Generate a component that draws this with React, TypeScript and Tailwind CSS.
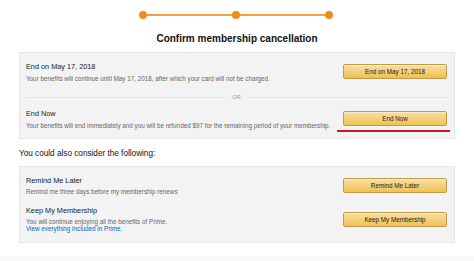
import React from 'react';

const font = { fontFamily: '"Liberation Sans", Arial, sans-serif' };

const YellowButton: React.FC<{ label: string }> = ({ label }) => (
  <button className="w-[104px] h-[15px] shrink-0 rounded-[2px] border border-[#bf9d48] bg-gradient-to-b from-[#f7dfa5] to-[#f0c14b] text-[6.3px] leading-[13px] text-[#222] shadow-[0_1px_0_rgba(255,255,255,0.4)_inset]">
    {label}
  </button>
);

const Option: React.FC<{ title: string; children: React.ReactNode; gap?: string }> = ({ title, children, gap = 'mt-[3.6px]' }) => (
  <div className="min-w-0">
    <div className="text-[7.3px] leading-[9px] text-[#222]">{title}</div>
    <div className={`${gap} text-[6.3px] leading-[7px] text-[#666] whitespace-nowrap`}>{children}</div>
  </div>
);

export default function App() {
  return (
    <div className="relative w-[474px] h-[261px] overflow-hidden bg-white" style={font}>
      {/* progress */}
      <div className="flex items-center w-[194px] ml-[139px] pt-[11px]">
        <div className="w-2 h-2 rounded-full bg-[#f08c1e]" />
        <div className="flex-1 h-[2px] bg-[#f2a33a]" />
        <div className="w-2 h-2 rounded-full bg-[#f08c1e]" />
        <div className="flex-1 h-[2px] bg-[#f2a33a]" />
        <div className="w-2 h-2 rounded-full bg-[#f08c1e]" />
      </div>

      <h1 className="mt-[14px] text-center text-[10px] leading-[12px] font-bold text-[#111]">
        Confirm membership cancellation
      </h1>

      <div className="mx-[19px] mt-[7px] border border-[#e7e7e7] bg-[#f3f3f3] pl-[6px] pr-[7px] pt-[9px] pb-[9px]">
        <div className="flex items-center justify-between">
          <Option title="End on May 17, 2018">
            Your benefits will continue until May 17, 2018, after which your card will not be charged.
          </Option>
          <YellowButton label="End on May 17, 2018" />
        </div>

        <div className="mt-[12px] flex items-center h-[7px]">
          <div className="flex-1 h-px bg-[#e3e3e3]" />
          <span className="px-[6px] text-[5.6px] leading-[7px] text-[#999]">OR</span>
          <div className="flex-1 h-px bg-[#e3e3e3]" />
        </div>

        <div className="mt-[8px] flex items-center justify-between">
          <Option title="End Now" gap="mt-[4.2px]">
            Your benefits will end immediately and you will be refunded $97 for the remaining period of your membership.
          </Option>
          <YellowButton label="End Now" />
        </div>
      </div>

      <div className="ml-[19px] mt-[10px] text-[8.2px] leading-[10px] text-[#111]">
        You could also consider the following:
      </div>

      <div className="mx-[19px] mt-[7px] border border-[#e7e7e7] bg-[#f3f3f3] pl-[6px] pr-[7px] pt-[9.5px] pb-[9.5px]">
        <div className="flex items-center justify-between">
          <Option title="Remind Me Later" gap="mt-[2.5px]">
            Remind me three days before my membership renews
          </Option>
          <YellowButton label="Remind Me Later" />
        </div>
        <div className="mt-[11px] flex items-center justify-between">
          <div>
            <div className="text-[7.3px] leading-[9px] text-[#222]">Keep My Membership</div>
            <div className="mt-[3px] text-[6.3px] leading-[7px] text-[#666]">
              You will continue enjoying all the benefits of Prime.
            </div>
            <a className="block mt-[0.5px] text-[6.3px] leading-[7px] text-[#0066c0]">
              View everything included in Prime.
            </a>
          </div>
          <YellowButton label="Keep My Membership" />
        </div>
      </div>

      <div className="absolute left-0 right-0 top-[256px] bottom-0 bg-[#f8f8f8]" />

      {/* red annotation underline */}
      <div className="absolute left-[337px] top-[129.5px] w-[113px] h-[2px] bg-[#d0142c]" />
    </div>
  );
}
